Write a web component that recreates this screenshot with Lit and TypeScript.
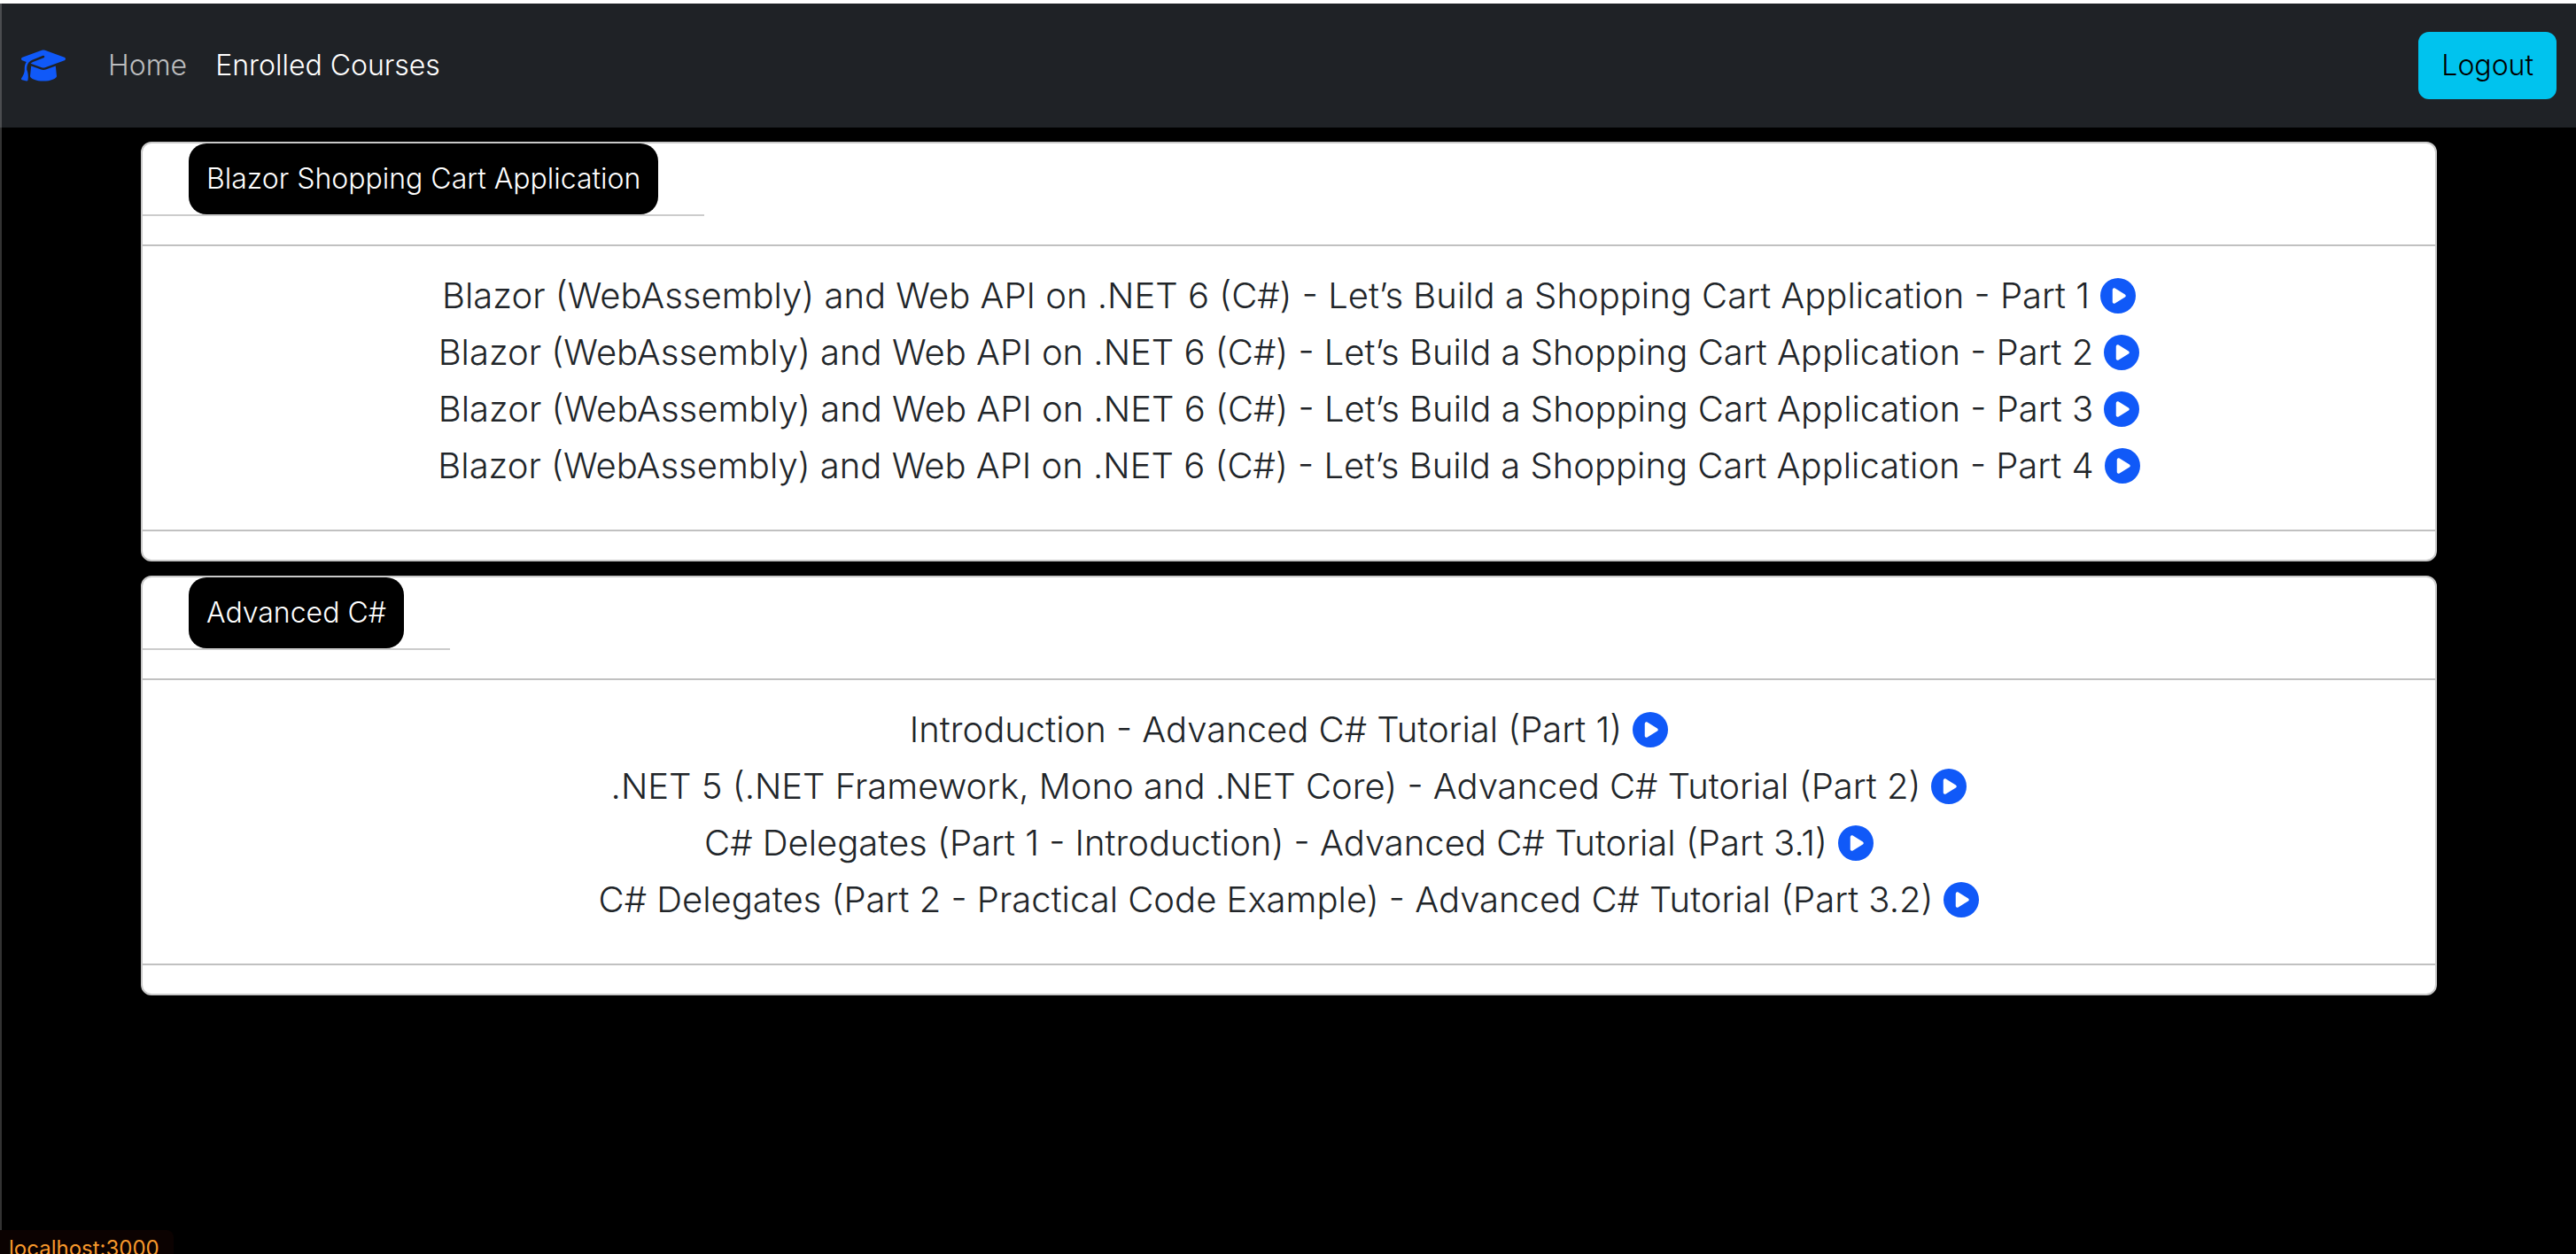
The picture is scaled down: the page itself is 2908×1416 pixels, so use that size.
import { LitElement, html, css } from "lit";
import { customElement } from "lit/decorators.js";

interface Section {
  title: string;
  lessons: string[];
}

const SECTIONS: Section[] = [
  {
    title: "Blazor Shopping Cart Application",
    lessons: [1, 2, 3, 4].map(
      (n) =>
        `Blazor (WebAssembly) and Web API on .NET 6 (C#) - Let’s Build a Shopping Cart Application - Part ${n}`
    ),
  },
  {
    title: "Advanced C#",
    lessons: [
      "Introduction - Advanced C# Tutorial (Part 1)",
      ".NET 5 (.NET Framework, Mono and .NET Core) - Advanced C# Tutorial (Part 2)",
      "C# Delegates (Part 1 - Introduction) - Advanced C# Tutorial (Part 3.1)",
      "C# Delegates (Part 2 - Practical Code Example) - Advanced C# Tutorial (Part 3.2)",
    ],
  },
];

@customElement("app-navbar")
class AppNavbar extends LitElement {
  static styles = css`
    :host {
      display: block;
      border-top: 4px solid #ffffff;
    }
    .bar {
      display: flex;
      align-items: center;
      padding: 32px 22px;
      border-left: 2px solid #4b4d50;
      background: #1f2226;
    }
    .brand {
      display: flex;
      color: #1059f8;
    }
    .cap {
      width: 50px;
      height: 40px;
      fill: currentColor;
    }
    .links {
      display: flex;
      flex: 1;
      gap: 32px;
      margin: 0 0 0 48px;
      padding: 0;
      list-style: none;
    }
    .link {
      color: #bcbdbe;
      font-size: 32px;
      line-height: 48px;
      text-decoration: none;
    }
    .active {
      color: #ffffff;
    }
    .logout {
      padding: 12px 24px;
      border: 2px solid #00c3ee;
      border-radius: 12px;
      background: #00c3ee;
      color: #000000;
      font: inherit;
      font-size: 32px;
      line-height: 48px;
      cursor: pointer;
    }
  `;

  render() {
    return html`
      <nav class="bar">
        <a class="brand" href="#" aria-label="Courses home">
          <svg class="cap" viewBox="0 0 640 512" aria-hidden="true">
            <path
              d="M320 32c-8.1 0-16.1 1.4-23.7 4.1L15.8 137.4C6.3 140.9 0 149.9 0 160s6.3 19.1 15.8 22.6l57.9 20.9C57.3 229.3 48 259.8 48 291.9v28.1c0 28.4-10.8 57.7-22.3 80.8c-6.5 13-13.9 25.8-22.5 37.6C0 442.7-.9 448.3 .9 453.4s6 8.9 11.2 10.2l64 16c4.2 1.1 8.7 .3 12.4-2s6.3-6.1 7.1-10.4c8.6-42.8 4.3-81.2-2.1-108.7C90.3 344.3 86 329.8 80 316.5V291.9c0-30.2 10.2-58.7 27.9-81.5c12.9-15.5 29.6-28 49.2-35.7l157-61.7c8.2-3.2 17.5 .8 20.7 9s-.8 17.5-9 20.7l-157 61.7c-12.4 4.9-23.3 12.4-32.2 21.6l159.6 57.6c7.6 2.7 15.6 4.1 23.7 4.1s16.1-1.4 23.7-4.1L624.2 182.6c9.5-3.4 15.8-12.5 15.8-22.6s-6.3-19.1-15.8-22.6L343.7 36.1C336.1 33.4 328.1 32 320 32zM128 408c0 35.3 86 72 192 72s192-36.7 192-72L496.7 262.6 354.5 314c-11.1 4-22.8 6-34.5 6s-23.5-2-34.5-6L143.3 262.6 128 408z"
            ></path>
          </svg>
        </a>
        <ul class="links">
          <li><a class="link" href="#home">Home</a></li>
          <li><a class="link active" href="#courses" aria-current="page">Enrolled Courses</a></li>
        </ul>
        <button class="logout" type="button">Logout</button>
      </nav>
    `;
  }
}

@customElement("course-card")
class CourseCard extends LitElement {
  static properties = { section: { attribute: false } };
  declare section: Section;

  static styles = css`
    :host {
      display: block;
      border: 2px solid #c9c9c9;
      border-radius: 12px;
      background: #ffffff;
      color: #212529;
    }
    .tabs {
      display: flex;
      width: fit-content;
      padding: 0 52px;
      border-bottom: 2px solid #cccccc;
    }
    .tab {
      padding: 16px 20px;
      border: 0;
      border-radius: 20px;
      background: #000000;
      color: #ffffff;
      font: inherit;
      font-size: 32px;
      line-height: 48px;
      cursor: pointer;
    }
    .lessons {
      margin: 32px 0;
      padding: 24px 0 40px;
      border: solid #c1c1c1;
      border-width: 2px 0;
      list-style: none;
    }
    .lesson {
      display: flex;
      align-items: center;
      justify-content: center;
      gap: 12px;
      font-size: 40px;
      line-height: 64px;
    }
    .play {
      display: flex;
      padding: 0;
      border: 0;
      background: none;
      color: #1059f8;
      cursor: pointer;
    }
    .icon {
      width: 40px;
      height: 40px;
      fill: currentColor;
    }
  `;

  render() {
    return html`
      <div class="tabs"><button class="tab" type="button">${this.section.title}</button></div>
      <ul class="lessons">
        ${this.section.lessons.map(
          (name) => html`
            <li class="lesson">
              <span>${name}</span>
              <button class="play" type="button" aria-label="Play">
                <svg class="icon" viewBox="0 0 512 512" aria-hidden="true">
                  <path
                    d="M0 256a256 256 0 1 1 512 0A256 256 0 1 1 0 256zM188.3 147.1c-7.6 4.2-12.3 12.3-12.3 20.9V344c0 8.7 4.7 16.7 12.3 20.9s16.8 4.1 24.3-.5l144-88c7.1-4.4 11.5-12.1 11.5-20.5s-4.4-16.1-11.5-20.5l-144-88c-7.4-4.5-16.7-4.7-24.3-.5z"
                  ></path>
                </svg>
              </button>
            </li>
          `
        )}
      </ul>
    `;
  }
}

@customElement("app-root")
class AppRoot extends LitElement {
  static styles = css`
    :host {
      display: flex;
      flex-direction: column;
      min-height: 100vh;
      background: #000000;
      font-family: Inter, "Open Sans", sans-serif;
      font-weight: 300;
    }
    .page {
      flex: 1;
      padding: 16px 0;
      border-left: 2px solid #333333;
    }
    .container {
      display: flex;
      flex-direction: column;
      gap: 16px;
      max-width: 2640px;
      margin: 0 auto;
      padding: 0 24px;
      box-sizing: border-box;
    }
    .status {
      position: fixed;
      left: 0;
      bottom: 0;
      height: 27px;
      padding: 0 16px 0 10px;
      border-top-right-radius: 8px;
      background: #0b0201;
      color: #f7982b;
      font-size: 24px;
      font-weight: 400;
      line-height: 42px;
      overflow: hidden;
    }
  `;

  render() {
    return html`
      <app-navbar></app-navbar>
      <main class="page">
        <div class="container">
          ${SECTIONS.map((s) => html`<course-card .section=${s}></course-card>`)}
        </div>
      </main>
      <div class="status" role="status">localhost:3000</div>
    `;
  }
}
